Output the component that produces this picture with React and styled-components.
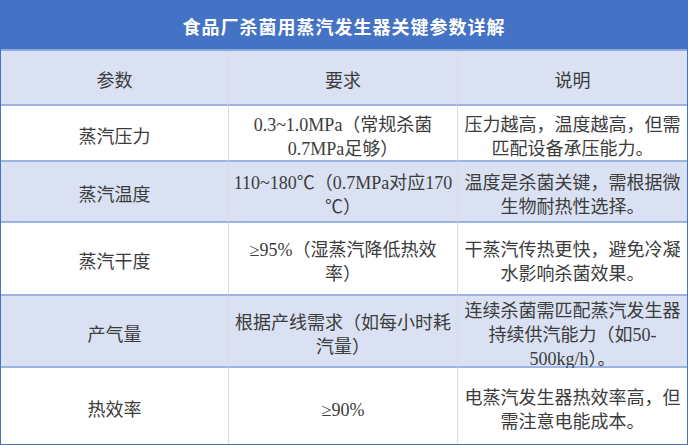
import React from "react";
import styled, { createGlobalStyle } from "styled-components";

const GlobalStyle = createGlobalStyle`
  html, body {
    margin: 0;
    padding: 0;
    background: #ffffff;
  }
  * {
    box-sizing: border-box;
  }
`;

const Table = styled.div`
  width: 688px;
  display: grid;
  grid-template-columns: 228px 229px 1fr;
  grid-template-rows: 51px 55px 56px 61px 73px 72px 76px;
  border-left: 1px solid #4472c4;
  border-right: 1px solid #4472c4;
  border-bottom: 1px solid #4472c4;
  font-family: "Liberation Serif", "Noto Sans CJK SC", serif;
  font-size: 18px;
  color: #3c3c3c;
`;

const Title = styled.div`
  grid-column: 1 / -1;
  background: #4472c4;
  color: #ffffff;
  font-weight: bold;
  font-size: 18px;
  letter-spacing: 1px;
  display: flex;
  align-items: center;
  justify-content: center;
  padding-top: 3px;
  border-bottom: 2px solid #8ea9db;
`;

const Cell = styled.div`
  background: ${(p) => (p.$shade ? "#d9e1f2" : "#ffffff")};
  border-bottom: ${(p) => (p.$last ? "none" : "2px solid #9cb4e2")};
  border-right: ${(p) => (p.$end ? "none" : "1px solid #dcdcdc")};
  display: flex;
  flex-direction: column;
  align-items: center;
  justify-content: center;
  text-align: center;
  padding: 7px 4px 0;
  line-height: 24px;
  white-space: nowrap;
`;

const Line = styled.span`
  display: block;
`;

const header = ["参数", "要求", "说明"];

const rows = [
  [["蒸汽压力"], ["0.3~1.0MPa（常规杀菌", "0.7MPa足够）"], ["压力越高，温度越高，但需", "匹配设备承压能力。"]],
  [["蒸汽温度"], ["110~180℃（0.7MPa对应170", "℃）"], ["温度是杀菌关键，需根据微", "生物耐热性选择。"]],
  [["蒸汽干度"], ["≥95%（湿蒸汽降低热效", "率）"], ["干蒸汽传热更快，避免冷凝", "水影响杀菌效果。"]],
  [["产气量"], ["根据产线需求（如每小时耗", "汽量）"], ["连续杀菌需匹配蒸汽发生器", "持续供汽能力（如50-", "500kg/h）。"]],
  [["热效率"], ["≥90%"], ["电蒸汽发生器热效率高，但", "需注意电能成本。"]],
];

export default function App() {
  return (
    <>
      <GlobalStyle />
      <Table>
        <Title>食品厂杀菌用蒸汽发生器关键参数详解</Title>
        {header.map((h, i) => (
          <Cell key={h} $shade $end={i === 2}>
            {h}
          </Cell>
        ))}
        {rows.map((row, r) =>
          row.map((lines, c) => (
            <Cell
              key={r + "-" + c}
              $shade={r % 2 === 1}
              $end={c === 2}
              $last={r === rows.length - 1}
            >
              {lines.map((l) => (
                <Line key={l}>{l}</Line>
              ))}
            </Cell>
          ))
        )}
      </Table>
    </>
  );
}
